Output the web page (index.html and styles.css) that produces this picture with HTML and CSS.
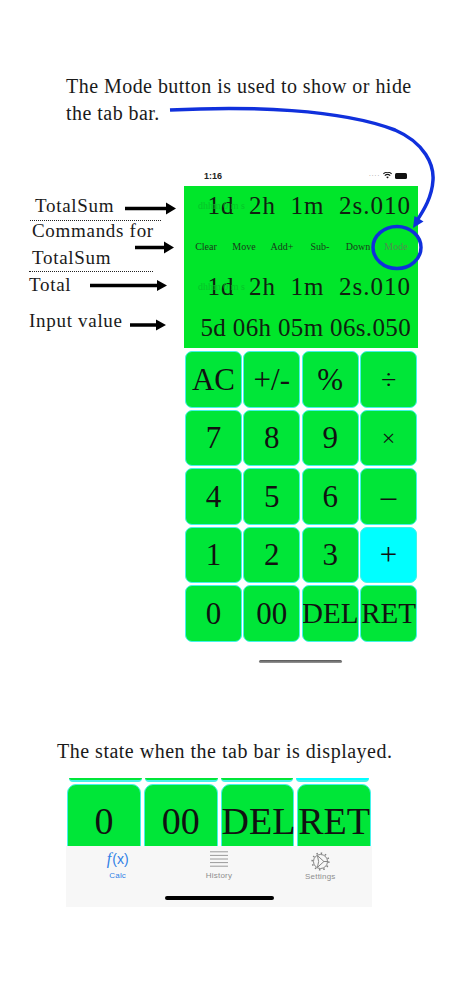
FILE: index.html
```html
<!DOCTYPE html>
<html lang="en">
<head>
<meta charset="utf-8">
<title>Mode button</title>
<link rel="stylesheet" href="styles.css">
</head>
<body>
<main class="page">
  <p class="caption caption-top">The Mode button is used to show or hide<br>the tab bar.</p>

  <section class="phone">
    <div class="status">
      <span class="time">1:16</span>
      <span class="status-icons">
        <span class="signal">....</span>
        <svg class="wifi" viewBox="0 0 12 9"><path d="M6 8.6 4.2 6.5a2.7 2.7 0 0 1 3.6 0zM2.9 5.2 1.9 4a6.2 6.2 0 0 1 8.2 0L9.1 5.2a4.6 4.6 0 0 0-6.2 0zM.9 2.9 0 1.8a9 9 0 0 1 12 0l-.9 1.1a7.6 7.6 0 0 0-10.2 0z"/></svg>
        <span class="battery"></span>
      </span>
    </div>
    <div class="display">
      <div class="readout"><span class="ghost">dhhm 0 m s</span><span>1d&nbsp; 2h&nbsp; 1m&nbsp; 2s.010</span></div>
      <div class="commands">
        <span>Clear</span><span>Move</span><span>Add+</span><span>Sub-</span><span>Down</span><span class="mode">Mode</span>
      </div>
      <div class="readout"><span class="ghost">dhhm 0 m s</span><span>1d&nbsp; 2h&nbsp; 1m&nbsp; 2s.010</span></div>
      <div class="readout readout-input"><span>5d 06h 05m 06s.050</span></div>
    </div>
    <div class="keys">
      <button class="key">AC</button><button class="key">+/-</button><button class="key">%</button><button class="key key-div">÷</button>
      <button class="key">7</button><button class="key">8</button><button class="key">9</button><button class="key key-mul">×</button>
      <button class="key">4</button><button class="key">5</button><button class="key">6</button><button class="key">–</button>
      <button class="key">1</button><button class="key">2</button><button class="key">3</button><button class="key key-plus">+</button>
      <button class="key">0</button><button class="key">00</button><button class="key key-word">DEL</button><button class="key key-word">RET</button>
    </div>
    <div class="home-grey"></div>
  </section>

  <p class="caption caption-low">The state when the tab bar is displayed.</p>

  <section class="shot">
    <div class="shot-edge"><span></span><span></span><span></span><span class="edge-plus"></span></div>
    <div class="shot-keys">
      <div class="shot-key">0</div><div class="shot-key">00</div><div class="shot-key">DEL</div><div class="shot-key">RET</div>
    </div>
    <div class="tabbar">
      <div class="tabs">
        <div class="tab tab-on">
          <span class="fx"><i>f</i>(x)</span>
          <span class="tab-label">Calc</span>
        </div>
        <div class="tab">
          <svg class="tab-icon" viewBox="0 0 18 16"><path d="M0 .8h18M0 4.4h18M0 8h18M0 11.6h18M0 15.2h18"/></svg>
          <span class="tab-label">History</span>
        </div>
        <div class="tab">
          <svg class="tab-icon gear" viewBox="0 0 20 20"><circle cx="10" cy="10" r="7.4"/><circle cx="10" cy="10" r="8.8" stroke-dasharray="1.6 3" stroke-width="1.6"/><path d="M6.8 3.800 13.600 10l-6.800 6.200M13.600 10h4.600M6.800 3.800 8 10l-1.200 6.200"/></svg>
          <span class="tab-label">Settings</span>
        </div>
      </div>
      <div class="home-black"></div>
    </div>
  </section>

  <span class="note note-sum">TotalSum</span>
  <span class="note note-cmd1">Commands for</span>
  <span class="note note-cmd2">TotalSum</span>
  <span class="note note-total">Total</span>
  <span class="note note-input">Input value</span>
  <div class="rule rule-a"></div>
  <div class="rule rule-b"></div>

  <svg class="overlay" viewBox="0 0 460 996">
    <g class="black-arrows">
      <path d="M125 208.500h42M135 247.500h33M90 285.500h70M130 325h29"/>
    </g>
    <path class="solid" d="M176 208.500l-10-6v12zM174 247.500l-10-6v12zM167 285.500l-10-5.500v11zM166 325l-10-5.500v11z"/>
    <path class="blue-line" d="M170 110C250 106 340 109 395 130C425 143 434 165 433 180C432 197 424 210 416 222"/>
    <path class="blue-head" d="M413 228l1.500-12 9 5.500z"/>
    <ellipse class="blue-line" cx="397" cy="247.500" rx="24" ry="21"/>
  </svg>
</main>
</body>
</html>
```
FILE: styles.css
```css
* { box-sizing: border-box; }
html, body { margin: 0; padding: 0; background: #fff; }
body { font-family: "Liberation Serif", "Times New Roman", serif; color: #111; }
.page { position: relative; width: 460px; height: 996px; overflow: hidden; }

.caption { margin: 0; font-size: 20px; letter-spacing: .46px; color: #1a1a1a; }
.caption-top { padding: 73px 0 0 66px; line-height: 27px; height: 166px; }
.caption-low { padding: 0 0 0 57px; line-height: 24px; margin-top: 76px; letter-spacing: .5px; }

.phone { display: flex; flex-direction: column; margin-left: 184px; width: 234px; }
.status { height: 20px; display: flex; align-items: center; justify-content: space-between; padding: 0 11px 1px 20px; font-family: "Liberation Sans", sans-serif; }
.time { font-size: 9px; font-weight: 700; color: #222; }
.status-icons { display: flex; align-items: center; gap: 3px; }
.signal { font-size: 8px; line-height: 8px; color: #aaa; letter-spacing: .6px; margin-top: -3px; }
.wifi { width: 9px; height: 7px; fill: #111; }
.battery { width: 12px; height: 6px; background: #111; border-radius: 1.500px; }

.display { height: 162px; background: #00e62a; display: grid; grid-template-rows: repeat(4, 1fr); }
.readout { position: relative; display: flex; align-items: center; justify-content: flex-end; padding-right: 7px; font-size: 25px; letter-spacing: 1px; color: #102010; }
.readout-input { letter-spacing: .35px; }
.ghost { position: absolute; left: 14px; top: 14px; font-size: 10px; letter-spacing: 0; color: #06c428; }
.commands { display: grid; grid-template-columns: repeat(6, 1fr); align-items: center; justify-items: center; padding: 0 3px; font-size: 10px; color: #1a3a1a; }
.mode { color: #4f8f4f; }

.keys { display: grid; grid-template-columns: repeat(4, minmax(0, 1fr)); grid-auto-rows: 56.500px; gap: 2px 1.500px; width: 232px; margin: 3px 0 0 1px; }
.key { padding: 1px 0 0; border: 1px solid #45f2ea; border-radius: 7px; background: #00e638; font-family: inherit; font-size: 31px; color: #111; white-space: nowrap; overflow: hidden; display: flex; align-items: center; justify-content: center; }
.key-plus { background: #00ffff; }
.key-word { font-size: 29px; }
.key-div { font-size: 28px; }
.key-mul { font-size: 24px; }
.home-grey { width: 83px; height: 3.500px; margin: 18px 0 0 75px; border-radius: 2px; background: linear-gradient(#555, #999); }

.shot { width: 306px; margin: 15px 0 0 66px; }
.shot-edge { display: grid; grid-template-columns: repeat(4, minmax(0, 1fr)); gap: 3px; height: 6px; padding: 0 3px; }
.shot-edge span { height: 4px; background: #00e638; border-bottom: 2px solid #45f2ea; border-radius: 0 0 8px 8px; }
.shot-edge .edge-plus { background: #00ffff; }
.shot-keys { display: grid; grid-template-columns: repeat(4, minmax(0, 1fr)); gap: 3px; height: 62px; padding: 0 1px; overflow: hidden; }
.shot-key { height: 84px; border: 1.500px solid #45f2ea; border-radius: 9px; background: #00e638; font-size: 38px; line-height: 72px; text-align: center; white-space: nowrap; color: #111; }
.tabbar { height: 61px; background: #f7f7f7; display: flex; flex-direction: column; align-items: center; }
.tabs { display: grid; grid-template-columns: repeat(3, minmax(0, 1fr)); width: 100%; padding: 0 1px; }
.tab { display: flex; flex-direction: column; align-items: center; font-family: "Liberation Sans", sans-serif; color: #8e8e8e; height: 50px; padding-top: 5px; }
.tab-on { color: #2f7fe6; }
.fx { height: 16px; font-size: 14px; line-height: 15px; font-family: "Liberation Sans", sans-serif; }
.fx i { font-family: "Liberation Serif", serif; font-size: 16px; margin-right: 1px; }
.tab-icon { width: 18px; height: 16px; fill: none; stroke: #9a9a9a; stroke-width: 1; }
.gear { width: 19px; height: 19px; margin-top: 1px; margin-bottom: -3px; stroke: #808080; }
.tab-label { font-size: 8px; line-height: 10px; margin-top: 4px; letter-spacing: .2px; }
.home-black { width: 109px; height: 3.500px; border-radius: 2px; background: #000; }

.note { position: absolute; font-size: 19px; line-height: 22px; letter-spacing: .7px; white-space: nowrap; color: #1a1a1a; }
.note-sum { left: 35px; top: 195px; }
.note-cmd1 { left: 32px; top: 220px; }
.note-cmd2 { left: 32px; top: 247px; }
.note-total { left: 29px; top: 274px; }
.note-input { left: 29px; top: 310px; }
.rule { position: absolute; border-top: 1px dotted #222; }
.rule-a { left: 30px; top: 220px; width: 131px; }
.rule-b { left: 29px; top: 271px; width: 124px; }

.overlay { position: absolute; inset: 0; width: 460px; height: 996px; pointer-events: none; }
.black-arrows path { fill: none; stroke: #000; stroke-width: 3.500; }
.solid { fill: #000; }
.blue-line { fill: none; stroke: #1030dc; stroke-width: 3.500; }
.blue-head { fill: #1030dc; }
```
